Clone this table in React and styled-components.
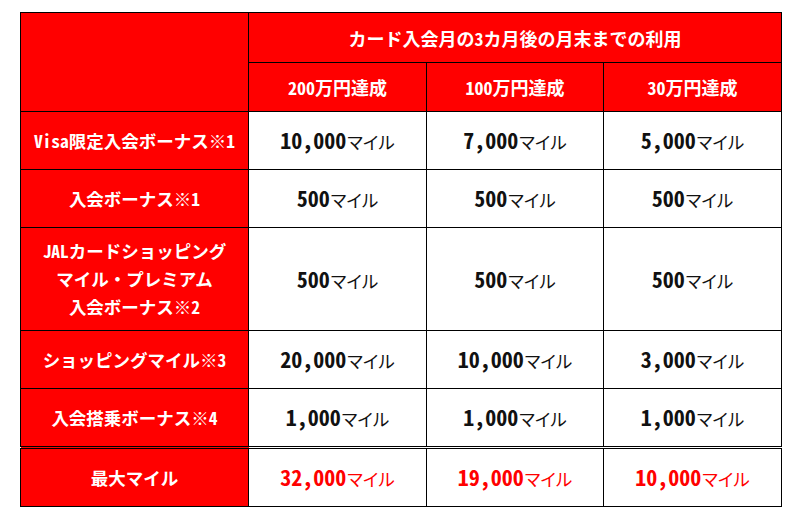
import styled, { createGlobalStyle } from "styled-components"

const GlobalStyle = createGlobalStyle`
    body {
        margin: 0;
        background: #fff;
        font-family: "Noto Sans CJK JP", sans-serif;
    }
`

const rows = [
    { label: ["Visa限定入会ボーナス※1"], values: ["10,000", "7,000", "5,000"], height: 58 },
    { label: ["入会ボーナス※1"], values: ["500", "500", "500"], height: 58 },
    { label: ["JALカードショッピング", "マイル・プレミアム", "入会ボーナス※2"], values: ["500", "500", "500"], height: 103 },
    { label: ["ショッピングマイル※3"], values: ["20,000", "10,000", "3,000"], height: 58 },
    { label: ["入会搭乗ボーナス※4"], values: ["1,000", "1,000", "1,000"], height: 58 },
]

const totals = ["32,000", "19,000", "10,000"]

export default function App() {
    return (
        <>
            <GlobalStyle />
            <Page>
                <Table>
                    <colgroup>
                        <col style={{ width: 228 }} />
                        <col style={{ width: 178 }} />
                        <col style={{ width: 177 }} />
                        <col style={{ width: 178 }} />
                    </colgroup>
                    <thead>
                        <tr>
                            <HeadCell rowSpan={2} />
                            <HeadCell colSpan={3} $h={50}>カード入会月の3カ月後の月末までの利用</HeadCell>
                        </tr>
                        <tr>
                            <HeadCell $h={49}>200万円達成</HeadCell>
                            <HeadCell $h={49}>100万円達成</HeadCell>
                            <HeadCell $h={49}>30万円達成</HeadCell>
                        </tr>
                    </thead>
                    <tbody>
                        {rows.map((row) => (
                            <tr key={row.label[0]}>
                                <LabelCell $h={row.height}>
                                    {row.label.map((line) => <Line key={line}>{line}</Line>)}
                                </LabelCell>
                                {row.values.map((v, i) => (
                                    <ValueCell key={i} $h={row.height}>
                                        <Num>{v}</Num><Unit>マイル</Unit>
                                    </ValueCell>
                                ))}
                            </tr>
                        ))}
                        <tr>
                            <LabelCell $h={58} $total>最大マイル</LabelCell>
                            {totals.map((v, i) => (
                                <ValueCell key={i} $h={58} $total>
                                    <Num>{v}</Num><Unit>マイル</Unit>
                                </ValueCell>
                            ))}
                        </tr>
                    </tbody>
                </Table>
            </Page>
        </>
    )
}

const Page = styled.div`
    padding: 12px 0 0 20px;
`

const Table = styled.table`
    width: 761px;
    table-layout: fixed;
    border-collapse: collapse;
    border: 1px solid #000;
`

const HeadCell = styled.th`
    background: #ff0000;
    color: #fff;
    border: 1px solid #000;
    height: ${(p) => (p.$h ? p.$h - 1 : 0)}px;
    padding: 0;
    font-family: "Noto Sans CJK JP", sans-serif;
    font-feature-settings: "hwid";
    font-size: 18px;
    font-weight: 700;
    text-align: center;
    vertical-align: middle;
`

const LabelCell = styled(HeadCell)`
    font-size: 17.5px;
    border-top: ${(p) => (p.$total ? "3px double #000" : "1px solid #000")};
`

const Line = styled.div`
    line-height: 28px;
`

const ValueCell = styled.td`
    background: #fff;
    color: ${(p) => (p.$total ? "#ff0000" : "#111")};
    border: 1px solid #000;
    border-top: ${(p) => (p.$total ? "3px double #000" : "1px solid #000")};
    height: ${(p) => p.$h - 4}px;
    padding: 0 0 3px;
    text-align: center;
    vertical-align: middle;
    white-space: nowrap;
`

const Num = styled.span`
    font-family: "Noto Sans CJK JP", sans-serif;
    font-feature-settings: "hwid";
    font-size: 22px;
    font-weight: 700;
`

const Unit = styled.span`
    font-family: "Noto Sans CJK JP", sans-serif;
    font-feature-settings: "palt";
    font-size: 17.5px;
    font-weight: 400;
    padding-left: 1px;
`
